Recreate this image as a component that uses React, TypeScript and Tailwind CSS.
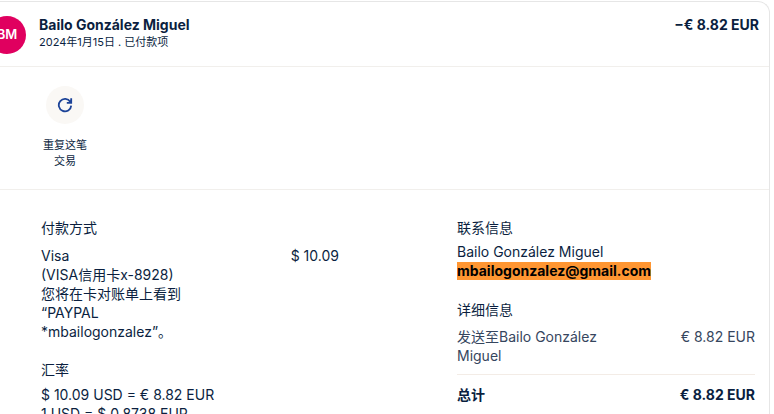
import type { ReactNode } from "react";

function SectionTitle({ children }: { children: ReactNode }) {
  return <h3 className="text-sm leading-5 font-normal">{children}</h3>;
}

function Header() {
  return (
    <header className="flex items-start border-b border-[#f1efec] pt-[13px] pr-2.5 pb-3">
      <div className="mt-px -ml-3 flex size-[38px] shrink-0 items-center justify-center rounded-full bg-[#e0005f] text-[13px] font-semibold text-white">
        BM
      </div>
      <div className="ml-[13px] flex-1">
        <h2 className="text-sm leading-5 font-bold">Bailo González Miguel</h2>
        <p className="text-[11px] leading-[14px]">2024年1月15日 . 已付款项</p>
      </div>
      <p className="text-sm leading-5 font-bold">−€ 8.82 EUR</p>
    </header>
  );
}

function RepeatAction() {
  return (
    <div className="border-b border-[#f1efec] pt-[19px] pb-5 pl-9">
      <button type="button" className="flex w-[58px] flex-col items-center gap-[13px] text-[11px] leading-4">
        <span className="flex size-[38px] items-center justify-center rounded-full bg-[#faf8f5]">
          <svg viewBox="0 0 16 16" className="size-4" fill="none" stroke="#1c4398" strokeWidth="1.8" aria-hidden="true">
            <path d="M13.3 4.9A6.2 6.2 0 1 0 14.2 8.6" />
            <path d="M14.2 1.2v4.6H9.8" />
            <path d="M14.4 2.2v3.8H10.6z" fill="#1c4398" stroke="none" />
          </svg>
        </span>
        <span className="w-12">重复这笔交易</span>
      </button>
    </div>
  );
}

export default function App() {
  return (
    <div className="h-screen overflow-hidden bg-white pt-px pr-1 font-['Inter','Noto_Sans_CJK_SC',sans-serif] text-[#0b1f3f]">
      <main className="min-h-full rounded-tr-xl border-t border-r border-[#e6e6e6]">
        <Header />
        <RepeatAction />
        <div className="flex justify-between pt-7 pr-3.5 pl-[41px] text-sm leading-[19px]">
          <div className="w-[298px] shrink-0">
            <SectionTitle>付款方式</SectionTitle>
            <div className="mt-2 flex justify-between">
              <div className="w-[150px]">
                <p>Visa</p>
                <p>(VISA信用卡x-8928)</p>
                <p>您将在卡对账单上看到</p>
                <p>“PAYPAL</p>
                <p>*mbailogonzalez”。</p>
              </div>
              <p>$ 10.09</p>
            </div>
            <div className="mt-[19px]">
              <SectionTitle>汇率</SectionTitle>
              <div className="mt-[5px]">
                <p>$ 10.09 USD = € 8.82 EUR</p>
                <p>1 USD = $ 0.8738 EUR</p>
              </div>
            </div>
          </div>
          <div className="w-[298px] shrink-0">
            <SectionTitle>联系信息</SectionTitle>
            <p className="mt-1">Bailo González Miguel</p>
            <p className="flex pt-px">
              <a href="mailto:mbailogonzalez@gmail.com" className="bg-[#ff9632] leading-[18px] font-bold text-black">
                mbailogonzalez@gmail.com
              </a>
            </p>
            <div className="mt-5">
              <SectionTitle>详细信息</SectionTitle>
            </div>
            <div className="mt-[7px] flex justify-between border-b border-[#f3ece6] pb-[9px] text-[#36465e]">
              <p className="w-40">发送至Bailo González Miguel</p>
              <p>€ 8.82 EUR</p>
            </div>
            <div className="mt-2.5 flex justify-between font-bold">
              <p>总计</p>
              <p>€ 8.82 EUR</p>
            </div>
          </div>
        </div>
      </main>
    </div>
  );
}
